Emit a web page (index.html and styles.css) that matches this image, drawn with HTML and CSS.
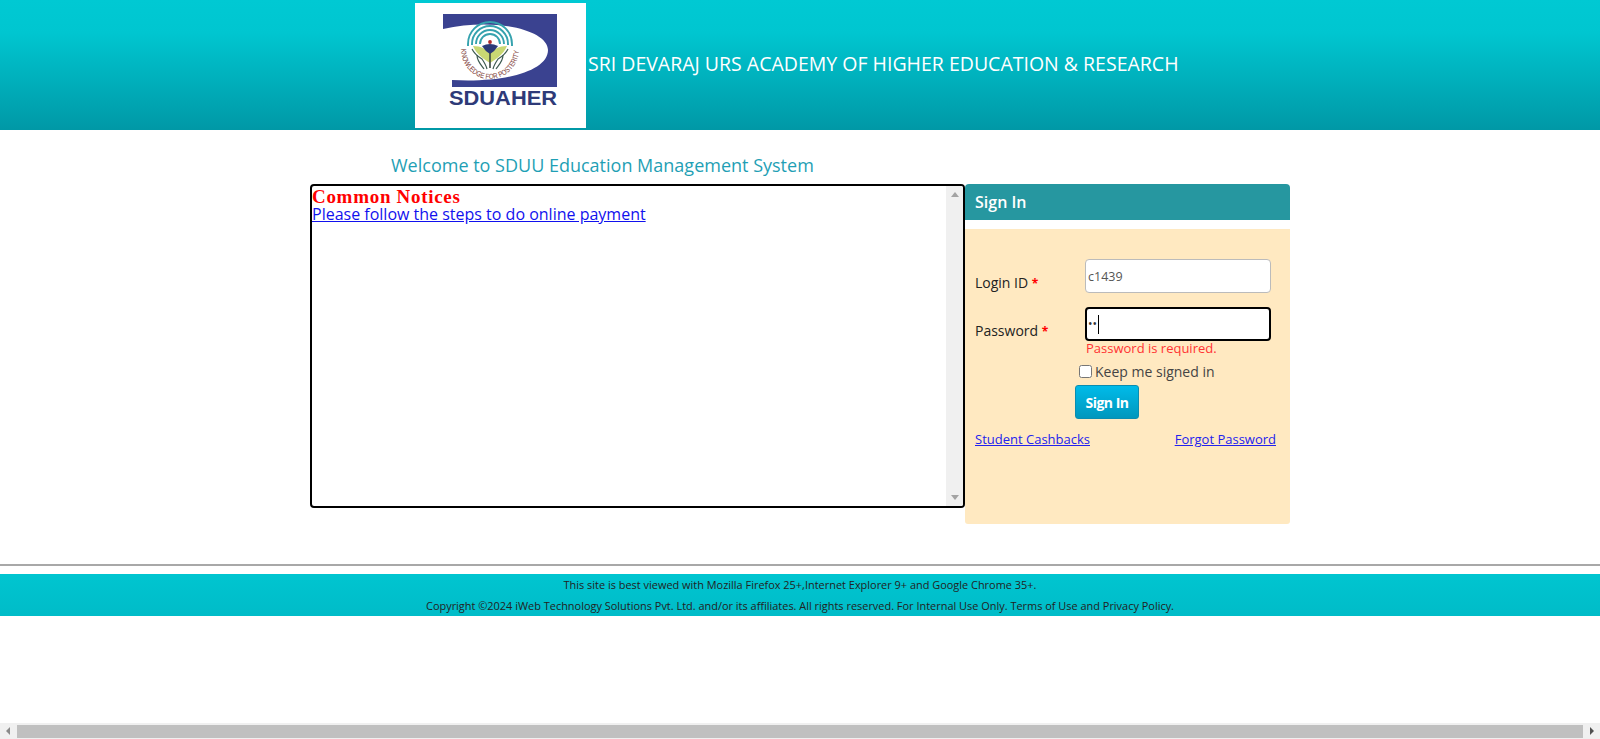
FILE: index.html
```html
<!DOCTYPE html>
<html lang="en">
<head>
<meta charset="utf-8">
<title>SDUAHER Sign In</title>
<link rel="stylesheet" href="styles.css">
</head>
<body>
<header class="top">
  <div class="logo">
    <svg width="171" height="125" viewBox="0 0 171 125" xmlns="http://www.w3.org/2000/svg">
      <path d="M28 11H142V84H37V77C90 80 133 68 133 47C133 27 80 14 28 26Z" fill="#3a4290"/>
      <g fill="none" stroke="#35a2ae" stroke-width="1.9">
        <path d="M53 43V41A22 22 0 0 1 97 41V43"/>
        <path d="M57 42V41A18 18 0 0 1 93 41V42"/>
        <path d="M61 41A14 14 0 0 1 89 41"/>
        <path d="M65 41A10 10 0 0 1 85 41"/>
      </g>
      <path d="M58 43C66 43 72 46 75 51C78 46 84 43 92 43C88 52 81 56 75 60C69 56 62 52 58 43Z" fill="#c9d873"/>
      <path d="M67 43Q75 39 83 43Q80 48 75 51Q70 48 67 43Z" fill="#2c3a78"/>
      <circle cx="75" cy="39" r="1.9" fill="#b02a2a"/>
      <path d="M75 50V65" fill="none" stroke="#3c4a40" stroke-width="1.6"/>
      <g fill="none" stroke="#3d5a50" stroke-width="1.2">
        <path d="M57 46C60 52 64 54 67 56C69 59 71 62 72 66"/>
        <path d="M93 46C90 52 86 54 83 56C81 59 79 62 78 66"/>
        <path d="M62 52C62 58 66 62 69 66"/>
        <path d="M88 52C88 58 84 62 81 66"/>
      </g>
      <defs><path id="arc" d="M46 46A29 30 0 0 0 104 46"/></defs>
      <text class="logo-arc"><textPath href="#arc" textLength="91" lengthAdjust="spacingAndGlyphs">KNOWLEDGE FOR POSTERITY</textPath></text>
      <text class="logo-name" x="34" y="102" textLength="108" lengthAdjust="spacingAndGlyphs">SDUAHER</text>
    </svg>
  </div>
  <h1 class="title">SRI DEVARAJ URS ACADEMY OF HIGHER EDUCATION &amp; RESEARCH</h1>
</header>

<main class="page">
  <h2 class="welcome">Welcome to SDUU Education Management System</h2>
  <div class="columns">
    <section class="notices">
      <div class="notices-body">
        <div class="notices-title">Common Notices</div>
        <a href="#" class="notices-link">Please follow the steps to do online payment</a>
      </div>
      <div class="vscroll">
        <span class="arrow arrow-up"></span>
        <span class="arrow arrow-down"></span>
      </div>
    </section>
    <section class="signin">
      <div class="signin-head">Sign In</div>
      <form class="signin-body">
        <div class="field">
          <label class="field-label">Login ID <span class="req">*</span></label>
          <input class="input" type="text" value="c1439">
        </div>
        <div class="field field-pw">
          <label class="field-label">Password <span class="req">*</span></label>
          <div class="input input-focus"><span class="dots">••</span><span class="caret"></span></div>
        </div>
        <div class="error">Password is required.</div>
        <label class="keep"><input class="check" type="checkbox">Keep me signed in</label>
        <button class="btn" type="button">Sign In</button>
        <div class="links">
          <a href="#">Student Cashbacks</a>
          <a href="#">Forgot Password</a>
        </div>
      </form>
    </section>
  </div>
</main>

<hr class="rule">
<footer class="foot">
  <div class="foot-line">This site is best viewed with Mozilla Firefox 25+,Internet Explorer 9+ and Google Chrome 35+.</div>
  <div class="foot-line">Copyright ©2024 iWeb Technology Solutions Pvt. Ltd. and/or its affiliates. All rights reserved. For Internal Use Only. Terms of Use and Privacy Policy.</div>
</footer>

<div class="hscroll">
  <span class="arrow arrow-left"></span>
  <span class="hthumb"></span>
  <span class="arrow arrow-right"></span>
</div>
</body>
</html>
```
FILE: styles.css
```css
* { box-sizing: border-box; }
html, body { margin: 0; padding: 0; height: 100%; overflow: hidden; background: #fff; }
body { font-family: "Open Sans", "Noto Sans", sans-serif; font-size: 14px; color: #222; }

.top {
  height: 130px;
  display: flex;
  align-items: flex-start;
  padding: 3px 0 0 415px;
  background: linear-gradient(to bottom, #00c9d3 0%, #00c6d0 25%, #0098a6 100%);
}
.logo { width: 171px; height: 125px; background: #fff; flex: none; }
.logo svg { display: block; }
.logo-arc { font-family: "Liberation Sans", sans-serif; font-size: 7.5px; fill: #7c3a34; }
.logo-name { font-family: "Liberation Sans", sans-serif; font-size: 20.5px; font-weight: 700; fill: #2e3a78; }
.title {
  margin: 48px 0 0 2px;
  font-size: 19.5px;
  line-height: 26px;
  font-weight: 400;
  color: #fff;
  white-space: nowrap;
}

.page { padding-left: 310px; }
.welcome {
  margin: 0;
  padding: 23px 0 0 81px;
  height: 54px;
  font-size: 18px;
  line-height: 25px;
  font-weight: 400;
  color: #1f9fb5;
}
.columns { display: flex; align-items: flex-start; height: 380px; }

.notices {
  width: 655px;
  height: 324px;
  display: flex;
  border: 2px solid #000;
  border-radius: 4px;
  overflow: hidden;
}
.notices-body { flex: 1; }
.notices-title {
  font-family: "Liberation Serif", serif;
  font-size: 19px;
  font-weight: 700;
  line-height: 22px;
  color: #f00;
  letter-spacing: 0.7px;
}
.notices-link { display: block; font-size: 16px; line-height: 12px; color: #11e; text-decoration: underline; }
.vscroll {
  width: 17px;
  background: #f0f0f0;
  display: flex;
  flex-direction: column;
  justify-content: space-between;
  align-items: center;
  padding: 6px 0;
}

.arrow { display: block; width: 0; height: 0; border-style: solid; flex: none; }
.arrow-up { border-width: 0 4px 5px; border-color: transparent transparent #a3a3a3; }
.arrow-down { border-width: 5px 4px 0; border-color: #a3a3a3 transparent transparent; }
.arrow-left { border-width: 4px 4px 4px 0; border-color: transparent #8a8a8a transparent transparent; }
.arrow-right { border-width: 4px 0 4px 4px; border-color: transparent transparent transparent #505050; }

.signin { width: 325px; }
.signin-head {
  height: 36px;
  padding-left: 10px;
  background: #2697a0;
  border-radius: 4px 4px 0 0;
  color: #fff;
  font-size: 16px;
  font-weight: 600;
  line-height: 36px;
}
.signin-body {
  margin: 9px 0 0;
  height: 295px;
  padding: 30px 10px 0;
  background: #ffe9c1;
  border-radius: 0 0 3px 3px;
}
.field { display: flex; align-items: flex-start; }
.field-pw { margin-top: 14px; }
.field-label { width: 110px; flex: none; line-height: 19px; padding-top: 14px; color: #222; }
.req { color: #f00; font-size: 12px; font-weight: 700; }
.input {
  display: block;
  width: 186px;
  height: 34px;
  padding: 0 2px;
  border: 1px solid #bbb;
  border-radius: 4px;
  background: #fff;
  font-family: inherit;
  font-size: 12.5px;
  color: #555;
}
.input-focus {
  display: flex;
  align-items: center;
  border: 2px solid #000;
  padding: 0 1px;
}
.dots { font-size: 12px; line-height: 1; color: #333; }
.caret { width: 1px; height: 19px; background: #000; margin-left: 1px; }
.error { margin-left: 111px; font-size: 13px; line-height: 15px; color: #f33; }
.keep {
  display: flex;
  align-items: center;
  margin: 6px 0 0 104px;
  font-size: 14px;
  line-height: 19px;
  color: #444;
}
.check { width: 13px; height: 13px; margin: 0 3px 0 0; }
.btn {
  display: block;
  width: 64px;
  height: 34px;
  margin: 4px 0 0 100px;
  padding: 0;
  border: 1px solid #0a8db0;
  border-radius: 3px;
  background: linear-gradient(to bottom, #00bbe9, #0097bd);
  color: #fff;
  font-family: inherit;
  font-size: 14px;
  font-weight: 700;
  letter-spacing: -0.5px;
}
.links {
  display: flex;
  justify-content: space-between;
  margin: 11px 4px 0 0;
  font-size: 13px;
  line-height: 18px;
}
.links a { color: #22e; }

.rule { margin: 0; height: 2px; border: 0; background: #a8a8a8; }
.foot {
  margin-top: 8px;
  height: 42px;
  background: linear-gradient(to bottom, #00c5d0, #00bcc8);
  text-align: center;
  font-size: 10.95px;
  color: #222;
}
.foot-line { height: 21px; line-height: 22px; }

.hscroll {
  position: fixed;
  left: 0;
  right: 0;
  bottom: 0;
  height: 16px;
  display: flex;
  align-items: center;
  background: #f0f0f0;
  padding: 0 6px;
  gap: 7px;
}
.hthumb { flex: 1; height: 13px; background: #c0c0c0; }
```
